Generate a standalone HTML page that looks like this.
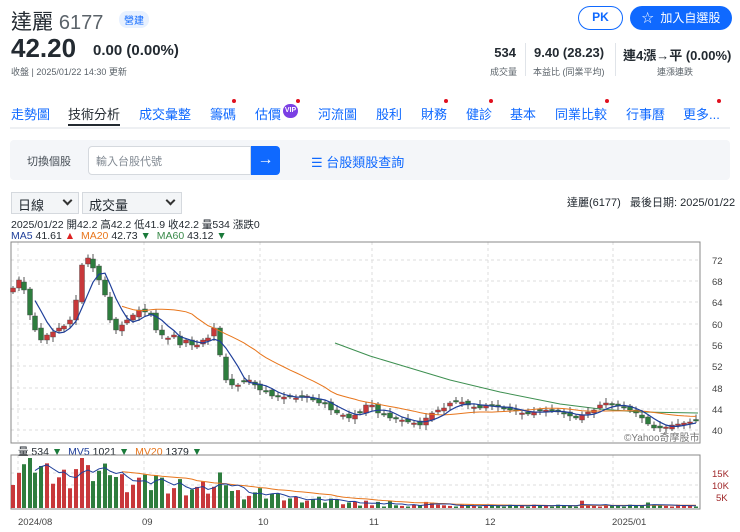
<!DOCTYPE html>
<html><head><meta charset="utf-8"><style>
*{box-sizing:border-box;margin:0;padding:0}
body{width:740px;height:532px;overflow:hidden;background:#fff;font-family:"Liberation Sans","Noto Sans CJK TC",sans-serif;color:#232a31;position:relative}
.a{position:absolute;white-space:nowrap}
.tab{position:absolute;top:104px;font-size:13px;color:#0f69ff}
.dot{position:absolute;width:4px;height:4px;border-radius:2px;background:#e0101e}
.sel{position:absolute;top:192px;height:22px;border:1px solid #d5d9de;background:#f3f5f7;font-size:13px;padding:2px 6px}
.chev{position:absolute;right:7px;top:4px;width:7px;height:7px;border-right:2px solid #333;border-bottom:2px solid #333;transform:rotate(45deg)}
</style></head><body>
<div class="a" style="left:11px;top:6px;font-size:21px;color:#232a31">達麗 <span style="color:#5b636a;font-size:20px">6177</span></div>
<div class="a" style="left:119px;top:11px;font-size:10px;color:#0f69ff;background:#e8f1ff;border-radius:8px;padding:1px 5px">營建</div>
<div class="a" style="left:11px;top:33px;font-size:26px;font-weight:bold">42.20</div>
<div class="a" style="left:93px;top:42px;font-size:15px;font-weight:bold">0.00 (0.00%)</div>
<div class="a" style="left:11px;top:65px;font-size:9px;color:#5b636a">收盤 | 2025/01/22 14:30 更新</div>

<div class="a" style="left:578px;top:6px;width:45px;height:24px;border:1.5px solid #0f69ff;border-radius:12px;color:#0f69ff;font-size:12px;font-weight:bold;text-align:center;line-height:21px">PK</div>
<div class="a" style="left:630px;top:6px;width:102px;height:24px;background:#0f69ff;border-radius:12px;color:#fff;font-size:12px;text-align:center;line-height:24px">☆&nbsp; 加入自選股</div>

<div class="a" style="left:493px;top:45px;font-size:13px;font-weight:bold;text-align:right;width:23px">534</div>
<div class="a" style="left:490px;top:65px;font-size:9px;color:#5b636a">成交量</div>
<div class="a" style="left:525px;top:43px;width:1px;height:33px;background:#e0e4e9"></div>
<div class="a" style="left:534px;top:45px;font-size:13px;font-weight:bold">9.40 (28.23)</div>
<div class="a" style="left:533px;top:65px;font-size:9px;color:#5b636a">本益比 (同業平均)</div>
<div class="a" style="left:615px;top:43px;width:1px;height:33px;background:#e0e4e9"></div>
<div class="a" style="left:623px;top:45px;font-size:13px;font-weight:bold">連4漲→平 (0.00%)</div>
<div class="a" style="left:657px;top:65px;font-size:9px;color:#5b636a">連漲連跌</div>

<div class="tab" style="left:11px">走勢圖</div>
<div class="tab" style="left:68px;color:#232a31">技術分析</div>
<div class="a" style="left:68px;top:124px;width:52px;height:2px;background:#232a31"></div>
<div class="tab" style="left:139px">成交彙整</div>
<div class="tab" style="left:210px">籌碼</div><div class="dot" style="left:232px;top:99px"></div>
<div class="tab" style="left:255px">估價</div><div class="a" style="left:283px;top:104px;width:15px;height:14px;border-radius:7px;background:#7b3fe4;color:#fff;font-size:7px;font-weight:bold;text-align:center;line-height:14px">VIP</div><div class="dot" style="left:296px;top:99px"></div>
<div class="tab" style="left:318px">河流圖</div>
<div class="tab" style="left:376px">股利</div>
<div class="tab" style="left:421px">財務</div><div class="dot" style="left:444px;top:99px"></div>
<div class="tab" style="left:466px">健診</div><div class="dot" style="left:489px;top:99px"></div>
<div class="tab" style="left:510px">基本</div>
<div class="tab" style="left:555px">同業比較</div><div class="dot" style="left:605px;top:99px"></div>
<div class="tab" style="left:626px">行事曆</div>
<div class="tab" style="left:683px">更多...</div><div class="dot" style="left:717px;top:99px"></div>
<div class="a" style="left:10px;top:127px;width:720px;height:2px;background:#eef0f3"></div>

<div class="a" style="left:10px;top:140px;width:720px;height:40px;background:#f4f6f9;border-radius:4px"></div>
<div class="a" style="left:27px;top:153px;font-size:11px;color:#464e56">切換個股</div>
<div class="a" style="left:88px;top:146px;width:163px;height:29px;background:#fff;border:1px solid #d5d9de;border-radius:4px 0 0 4px;font-size:11px;color:#828a93;padding:6px 7px">輸入台股代號</div>
<div class="a" style="left:251px;top:146px;width:29px;height:29px;background:#0f69ff;border-radius:0 4px 4px 0;color:#fff;font-size:16px;text-align:center;line-height:28px">→</div>
<div class="a" style="left:311px;top:152px;font-size:13px;color:#0f69ff">☰ 台股類股查詢</div>

<div class="sel" style="left:11px;width:68px">日線<span class="chev"></span></div>
<div class="sel" style="left:82px;width:100px">成交量<span class="chev"></span></div>
<div class="a" style="left:567px;top:194px;font-size:11px">達麗(6177)&nbsp;&nbsp; 最後日期: 2025/01/22</div>
<div class="a" style="left:11px;top:217px;font-size:10.5px">2025/01/22 開42.2 高42.2 低41.9 收42.2 量534 漲跌0</div>
<div class="a" style="left:11px;top:230px;font-size:10.5px"><span style="color:#1f3f9a">MA5</span> 41.61 <span style="color:#d22">▲</span> &nbsp;<span style="color:#e8761c">MA20</span> 42.73 <span style="color:#1a7a3a">▼</span> &nbsp;<span style="color:#3a8a4a">MA60</span> 43.12 <span style="color:#1a7a3a">▼</span></div>
<div class="a" style="left:18px;top:444px;font-size:10.5px"><span>量</span> 534 <span style="color:#1a7a3a">▼</span> &nbsp;<span style="color:#1f3f9a">MV5</span> 1021 <span style="color:#1a7a3a">▼</span> &nbsp;<span style="color:#e8761c">MV20</span> 1379 <span style="color:#1a7a3a">▼</span></div>

<svg id="c" class="a" style="left:0;top:0" width="740" height="532" font-family="Liberation Sans" font-size="9.5">
<g stroke="#ddd" stroke-dasharray="3,3" stroke-width="1">
<line x1="11" x2="700" y1="260" y2="260"/><line x1="11" x2="700" y1="281" y2="281"/><line x1="11" x2="700" y1="302" y2="302"/><line x1="11" x2="700" y1="324" y2="324"/><line x1="11" x2="700" y1="345" y2="345"/><line x1="11" x2="700" y1="366" y2="366"/><line x1="11" x2="700" y1="388" y2="388"/><line x1="11" x2="700" y1="409" y2="409"/><line x1="11" x2="700" y1="430" y2="430"/>
<line x1="11" x2="700" y1="473" y2="473"/><line x1="11" x2="700" y1="485" y2="485"/><line x1="11" x2="700" y1="497" y2="497"/>
<line x1="18" x2="18" y1="242" y2="442"/><line x1="144" x2="144" y1="242" y2="442"/><line x1="260" x2="260" y1="242" y2="442"/><line x1="372" x2="372" y1="242" y2="442"/><line x1="488" x2="488" y1="242" y2="442"/><line x1="613" x2="613" y1="242" y2="442"/>
<line x1="18" x2="18" y1="455" y2="508"/><line x1="144" x2="144" y1="455" y2="508"/><line x1="260" x2="260" y1="455" y2="508"/><line x1="372" x2="372" y1="455" y2="508"/><line x1="488" x2="488" y1="455" y2="508"/><line x1="613" x2="613" y1="455" y2="508"/>
</g>
<rect x="11" y="242" width="689" height="201" fill="none" stroke="#888" stroke-width="1"/>
<rect x="11" y="455" width="689" height="54" fill="none" stroke="#888" stroke-width="1"/>
<polyline fill="none" stroke="#3d8f50" stroke-width="1" points="335,343 370,356 400,365 450,380 500,392 560,404 600,409 640,412 698,413"/>
<g id="g"></g>
<g fill="#444" text-anchor="start">
<text x="712" y="264">72</text><text x="712" y="285">68</text><text x="712" y="306">64</text><text x="712" y="328">60</text><text x="712" y="349">56</text><text x="712" y="370">52</text><text x="712" y="392">48</text><text x="712" y="413">44</text><text x="712" y="434">40</text>
</g>
<g fill="#a0282a"><text x="712" y="477">15K</text><text x="712" y="489">10K</text><text x="716" y="501">5K</text></g>
<text x="624" y="441" fill="#777" font-size="10">©Yahoo奇摩股市</text>
<g fill="#444"><text x="18" y="525">2024/08</text><text x="142" y="525">09</text><text x="258" y="525">10</text><text x="369" y="525">11</text><text x="485" y="525">12</text><text x="612" y="525">2025/01</text></g>
</svg>
<script>
(function(){
var P=[[13,288],[19,280],[24,290],[30,315],[35,330],[41,340],[47,335],[53,332],[59,328],[64,326],[70,320],[76,300],[82,265],[88,258],[93,268],[99,280],[105,295],[110,320],[116,330],[122,325],[127,320],[133,315],[139,310],[145,312],[151,315],[156,330],[162,335],[168,338],[174,335],[180,345],[186,340],[192,345],[197,345],[203,340],[208,338],[214,328],[220,355],[226,380],[232,385],[238,385],[244,382],[249,380],[255,385],[260,390],[266,392],[272,396],[278,397],[284,397],[290,397],[296,398],[302,397],[307,396],[313,400],[319,403],[325,404],[331,410],[337,413],[343,415],[349,418],[355,415],[360,413],[366,405],[372,405],[378,413],[384,415],[390,418],[396,419],[402,420],[408,422],[414,423],[420,425],[426,418],[432,413],[438,410],[444,408],[450,403],[456,402],[462,402],[468,405],[474,407],[480,408],[486,405],[492,406],[498,407],[504,409],[510,410],[516,411],[522,413],[528,414],[534,412],[540,411],[546,410],[552,411],[558,412],[564,414],[570,416],[576,418],[582,415],[588,412],[594,410],[600,405],[606,403],[612,405],[618,406],[624,408],[630,410],[636,413],[642,418],[648,424],[654,428],[660,428],[666,427],[672,425],[678,424],[684,423],[690,422],[696,421]];
var g=document.getElementById('g'),s='';
function ma(n,i){if(i<n-1)return null;var t=0;for(var k=i-n+1;k<=i;k++)t+=P[k][1];return t/n}
var m5=[],m20=[],v5=[],v20=[],V=[];
for(var i=0;i<P.length;i++){var x=P[i][0],c=P[i][1],o=i?P[i-1][1]+((i*7)%5-2):c+4;
if(Math.abs(o-c)<1.5)o=c+((i%2)?1.5:-1.5);
var up=c<o,col=up?'#c8383a':'#2e7d3e',tp=Math.min(o,c),h=Math.abs(o-c);
s+='<line x1="'+x+'" x2="'+x+'" y1="'+(tp-2-(i%3)*1.5)+'" y2="'+(tp+h+2+(i%4))+'" stroke="#555" stroke-width="1"/>';
s+='<rect x="'+(x-2.5)+'" y="'+tp+'" width="5" height="'+Math.max(h,1)+'" fill="'+col+'" stroke="#444" stroke-width="0.4"/>';
var d=Math.max(0,1-i/60),vol=Math.max(1.5,(4+d*40)*(0.45+((i*13)%10)/14)+Math.abs(o-c)*0.4*(1+d));
if(i>60)vol=1.5+((i*7)%4)*0.6+(Math.abs(o-c)>4?4:0);
vol=Math.min(vol,50);
V.push(vol);
s+='<rect x="'+(x-2)+'" y="'+(508-vol)+'" width="4" height="'+vol+'" fill="'+col+'"/>';
var a=ma(5,i);if(a)m5.push(x+','+a);var b=ma(20,i);if(b)m20.push(x+','+b);
if(i>=4){var t=0;for(var k=i-4;k<=i;k++)t+=V[k];v5.push(x+','+(508-t/5));}
if(i>=19){var t2=0;for(var k2=i-19;k2<=i;k2++)t2+=V[k2];v20.push(x+','+(508-t2/20));}
}
s+='<polyline fill="none" stroke="#e8761c" stroke-width="1" points="'+m20.join(' ')+'"/>';
s+='<polyline fill="none" stroke="#1f3f9a" stroke-width="1.2" points="'+m5.join(' ')+'"/>';
s+='<polyline fill="none" stroke="#e8761c" stroke-width="1" points="'+v20.join(' ')+'"/>';
s+='<polyline fill="none" stroke="#1f3f9a" stroke-width="1" points="'+v5.join(' ')+'"/>';
g.innerHTML=s;
})();
</script>
</body></html>
